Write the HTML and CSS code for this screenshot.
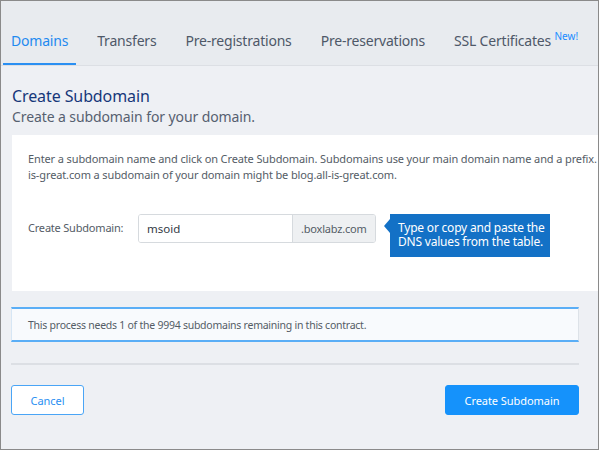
FILE: index.html
```html
<!DOCTYPE html>
<html>
<head>
<meta charset="utf-8">
<link rel="stylesheet" href="styles.css">
</head>
<body>
<div class="frame">
  <nav class="tabs">
    <div class="tab active">Domains</div>
    <div class="tab">Transfers</div>
    <div class="tab">Pre-registrations</div>
    <div class="tab">Pre-reservations</div>
    <div class="tab">SSL Certificates <sup class="new">New!</sup></div>
  </nav>
  <main class="content">
    <h1 class="title">Create Subdomain</h1>
    <p class="subtitle">Create a subdomain for your domain.</p>
    <section class="card">
      <p class="intro">Enter a subdomain name and click on Create Subdomain. Subdomains use your main domain name and a prefix. For example, if your domain is all-<br>is-great.com a subdomain of your domain might be blog.all-is-great.com.</p>
      <div class="form-row">
        <label class="label">Create Subdomain:</label>
        <div class="input-group">
          <div class="input">msoid</div>
          <div class="addon">.boxlabz.com</div>
        </div>
        <div class="tip">Type or copy and paste the<br>DNS values from the table.</div>
      </div>
    </section>
    <div class="notice-row">
      <div class="notice">This process needs 1 of the 9994 subdomains remaining in this contract.</div>
      <div class="notice notice-next"></div>
    </div>
    <hr class="sep">
    <div class="actions">
      <button class="btn btn-cancel">Cancel</button>
      <button class="btn btn-primary">Create Subdomain</button>
    </div>
  </main>
</div>
</body>
</html>
```

FILE: styles.css
```css
* { box-sizing: border-box; }
html, body { margin: 0; padding: 0; background: #ffffff; }
body { font-family: "Noto Sans", "Open Sans", sans-serif; }

.frame {
  width: 599px;
  height: 450px;
  border: 1px solid #8a8a8a;
  background: #eef0f4;
  overflow: hidden;
}

.tabs {
  display: flex;
  align-items: flex-end;
  gap: 13px;
  height: 65px;
  padding-left: 2px;
  background: #e8ebef;
  border-bottom: 1px solid #dcdfe4;
}
.tab {
  padding: 0 8px 12px;
  font-size: 14px;
  letter-spacing: -0.2px;
  line-height: 20px;
  color: #4e5868;
  border-bottom: 2px solid transparent;
  white-space: nowrap;
}
.tab.active { color: #1f8af0; border-bottom-color: #2a8ff2; }
.new {
  font-size: 10px;
  letter-spacing: 0;
  color: #1a8cff;
  vertical-align: 6px;
  line-height: 0;
}

.content { padding: 0 20px 0 10px; }
.title {
  margin: 19px 0 0 1px;
  font-size: 16px;
  letter-spacing: -0.1px;
  line-height: 22px;
  font-weight: 400;
  color: #16377a;
}
.subtitle {
  margin: 0 0 0 1px;
  font-size: 14px;
  letter-spacing: -0.1px;
  line-height: 20px;
  color: #566070;
}

.card {
  margin: 8px -40px 0 1px;
  height: 156px;
  background: #ffffff;
  padding: 16px 16px 0;
  overflow: hidden;
}
.intro {
  margin: 0;
  white-space: nowrap;
  font-size: 11px;
  letter-spacing: -0.12px;
  line-height: 16px;
  color: #545c66;
}
.form-row {
  display: flex;
  align-items: flex-start;
  margin-top: 31px;
}
.label {
  width: 110px;
  padding-top: 6px;
  font-size: 11px;
  letter-spacing: -0.2px;
  line-height: 16px;
  color: #545c66;
}
.input-group {
  display: flex;
  height: 29px;
  border: 1px solid #d6dade;
  border-radius: 3px;
  overflow: hidden;
}
.input {
  width: 154px;
  padding: 6px 8px;
  font-size: 11.5px;
  line-height: 16px;
  color: #333a44;
  background: #fff;
  border-right: 1px solid #d6dade;
}
.addon {
  width: 82px;
  padding: 6px 0 0 8px;
  font-size: 11px;
  letter-spacing: -0.2px;
  line-height: 16px;
  color: #545c66;
  background: #eef0f2;
}
.tip {
  position: relative;
  margin-left: 14px;
  width: 160px;
  height: 43px;
  padding: 7px 0 0 8px;
  background: #1371c6;
  color: #ffffff;
  font-size: 12px;
  letter-spacing: -0.2px;
  line-height: 14px;
  white-space: nowrap;
}
.tip::before {
  content: "";
  position: absolute;
  left: -6px;
  top: 5px;
  border-top: 7px solid transparent;
  border-bottom: 7px solid transparent;
  border-right: 6px solid #1371c6;
}

.notice-row {
  display: flex;
  gap: 19px;
  margin-top: 16px;
  margin-right: -60px;
}
.notice {
  flex: 0 0 568px;
  height: 35px;
  padding: 9px 16px;
  background: #f8fafd;
  border-top: 2px solid #5aaef6;
  border-bottom: 2px solid #5aaef6;
  border-left: 1px solid #d6e6f5;
  border-right: 1px solid #dde2e8;
  font-size: 10.5px;
  letter-spacing: -0.25px;
  line-height: 14px;
  color: #545c66;
}
.notice-next { flex: 0 0 40px; }

.sep {
  margin: 21px 0 0;
  width: 568px;
  height: 2px;
  border: 0;
  background: #dcdfe4;
}

.actions {
  display: flex;
  justify-content: space-between;
  width: 568px;
  margin-top: 20px;
}
.btn {
  height: 30px;
  border-radius: 3px;
  font-family: "Noto Sans", "Open Sans", sans-serif;
  font-size: 11px;
  letter-spacing: -0.05px;
  padding: 0;
}
.btn-cancel {
  width: 73px;
  background: #ffffff;
  border: 1px solid #4aa5f6;
  color: #2a8ff2;
}
.btn-primary {
  width: 134px;
  background: #1592fb;
  border: 1px solid #1592fb;
  color: #ffffff;
}
```
